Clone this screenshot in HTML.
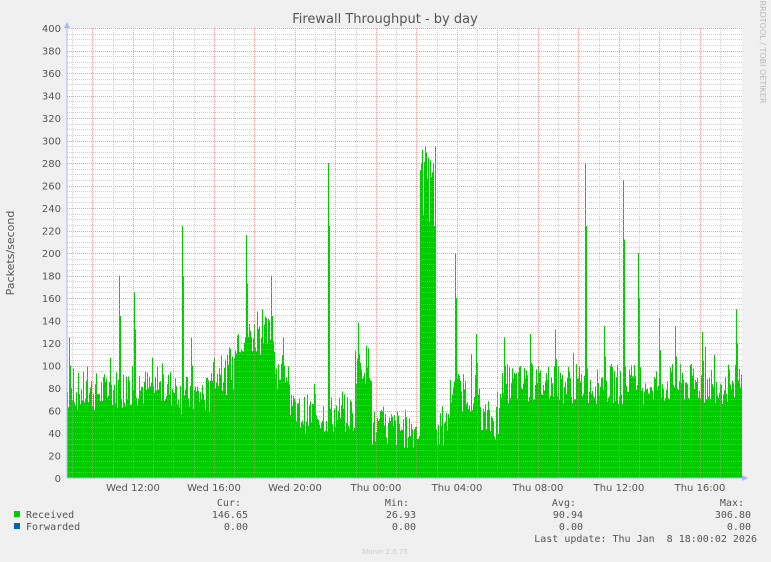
<!DOCTYPE html>
<html><head><meta charset="utf-8"><style>
body{margin:0;background:#f0f0f0;width:771px;height:562px;overflow:hidden;font-family:"DejaVu Sans","Liberation Sans",sans-serif}
svg{display:block}
text{white-space:pre}
</style></head><body>
<svg id="g" width="771" height="562" xmlns="http://www.w3.org/2000/svg">
<rect x="67" y="28" width="675" height="450" fill="#fff"/>
<g id="grid"></g>
<path id="area" fill="#00cc00"/>
<g id="grid2" opacity="0.35"></g>
<text x="385" y="23" font-size="13" fill="#555" text-anchor="middle">Firewall Throughput - by day</text>
<text transform="translate(14,253) rotate(-90)" font-size="11" fill="#555" text-anchor="middle">Packets/second</text>
<text transform="translate(760,52) rotate(90)" font-size="8" fill="#bbb" text-anchor="middle">RRDTOOL / TOBI OETIKER</text>
<g font-size="10" fill="#555" text-anchor="middle">
<text x="133" y="491">Wed 12:00</text><text x="214" y="491">Wed 16:00</text><text x="295" y="491">Wed 20:00</text>
<text x="376" y="491">Thu 00:00</text><text x="457" y="491">Thu 04:00</text><text x="538" y="491">Thu 08:00</text>
<text x="619" y="491">Thu 12:00</text><text x="700" y="491">Thu 16:00</text>
</g>
<g id="ylab" font-size="10" fill="#555" text-anchor="end"></g>
<g font-family="'DejaVu Sans Mono','Liberation Mono',monospace" font-size="10" fill="#555">
<rect x="14" y="511" width="6" height="6" fill="#00cc00"/><rect x="14" y="523" width="6" height="6" fill="#0066b3"/>
<text x="26" y="518">Received</text><text x="26" y="530">Forwarded</text>
<g text-anchor="end">
<text x="241" y="506">Cur:</text><text x="248" y="518">146.65</text><text x="248" y="530">0.00</text>
<text x="409" y="506">Min:</text><text x="416" y="518">26.93</text><text x="416" y="530">0.00</text>
<text x="576" y="506">Avg:</text><text x="583" y="518">90.94</text><text x="583" y="530">0.00</text>
<text x="744" y="506">Max:</text><text x="751" y="518">306.80</text><text x="751" y="530">0.00</text>
<text x="757" y="542" xml:space="preserve">Last update: Thu Jan  8 18:00:02 2026</text>
</g></g>
<text x="385" y="554" font-size="7" fill="#ccc" text-anchor="middle">Munin 2.0.75</text>
<line x1="67" y1="478" x2="746" y2="478" stroke="#aab4ff"/>
<line x1="67" y1="24" x2="67" y2="478" stroke="#aab4ff"/>
<path d="M64,28 L67,22 L70,28Z M742,475 L748,478 L742,481Z" fill="#aab4ff"/>
</svg>
<script>
var ns="http://www.w3.org/2000/svg",gr=document.getElementById('grid'),g2=document.getElementById('grid2'),yl=document.getElementById('ylab');
function ln(p,x1,y1,x2,y2,c){var l=document.createElementNS(ns,'line');l.setAttribute('x1',x1);l.setAttribute('y1',y1);l.setAttribute('x2',x2);l.setAttribute('y2',y2);l.setAttribute('stroke',c);l.setAttribute('stroke-dasharray','1,1');l.setAttribute('stroke-width','1');p.appendChild(l);}
function Y(v){return 478-v*1.125;}
for(var v=5;v<=400;v+=5){var y=Math.round(Y(v))+.5;var c=v%20==0?'#f0a0a0':'#d0d0d0';ln(gr,67,y,742,y,c);ln(g2,67,y,742,y,c);}
for(var v=0;v<=400;v+=20){var t=document.createElementNS(ns,'text');t.setAttribute('x',61);t.setAttribute('y',Y(v)+4);t.textContent=v;yl.appendChild(t);}
for(var i=0;i<33;i++){var x=Math.round(72+i*20.25)+.5;if(x>742)break;var c=(i%2==1)?'#f0a0a0':'#d0d0d0';ln(gr,x,28,x,478,c);ln(g2,x,28,x,478,c);}
var s=7;function r(){s=(s*9301+49297)%233280;return s/233280;}
function base(x){
 if(x<110)return 75;if(x<180)return 78;if(x<210)return 72;if(x<235)return 90;if(x<275)return 125;
 if(x<290)return 95;if(x<355)return 55;if(x<372)return 100;if(x<420)return 42;if(x<436)return 280;
 if(x<450)return 40;if(x<480)return 75;if(x<500)return 50;return 82;}
var sp={69:125,119:180,134:165,182:224,191:125,246:216,262:150,271:180,283:125,328:280,358:138,422:292,428:285,433:280,455:200,476:128,504:125,530:128,555:132,585:280,604:135,623:265,638:200,659:142,675:135,702:130,736:150};
var d='M67,478';for(var x=67;x<=741;x++){var v=base(x)+(r()-0.45)*36;if(r()<0.08)v+=r()*30;if(sp[x])v=sp[x];else if(sp[x-1])v=sp[x-1]*0.8;if(v<20)v=20;if(v>295)v=295;d+=' L'+x+','+Y(v).toFixed(1)+' L'+(x+1)+','+Y(v).toFixed(1);}
d+=' L742,478Z';document.getElementById('area').setAttribute('d',d);
</script>
</body></html>
